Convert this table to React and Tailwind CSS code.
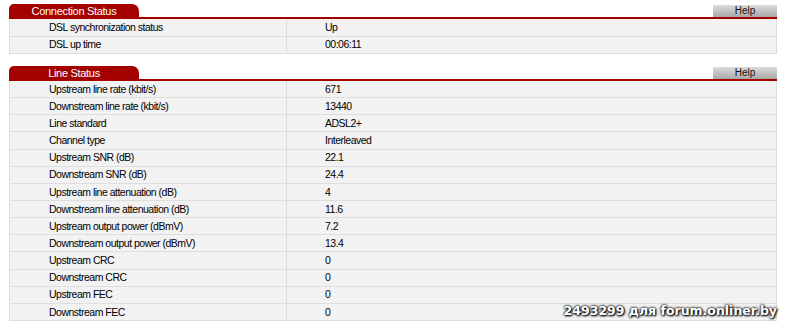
const connection = [
  ['DSL synchronization status', 'Up'],
  ['DSL up time', '00:06:11'],
];

const line = [
  ['Upstream line rate (kbit/s)', '671'],
  ['Downstream line rate (kbit/s)', '13440'],
  ['Line standard', 'ADSL2+'],
  ['Channel type', 'Interleaved'],
  ['Upstream SNR (dB)', '22.1'],
  ['Downstream SNR (dB)', '24.4'],
  ['Upstream line attenuation (dB)', '4'],
  ['Downstream line attenuation (dB)', '11.6'],
  ['Upstream output power (dBmV)', '7.2'],
  ['Downstream output power (dBmV)', '13.4'],
  ['Upstream CRC', '0'],
  ['Downstream CRC', '0'],
  ['Upstream FEC', '0'],
  ['Downstream FEC', '0'],
];

function Section({ title, rows, rowH }) {
  return (
    <div className="w-[768px]">
      <div className="flex items-end justify-between h-[13px]">
        <div className="w-[130px] h-[13px] rounded-tl-[5px] rounded-tr-[7px] bg-[#a50000] flex items-center justify-center text-white text-[11px] tracking-[-0.3px] leading-none pt-px">
          {title}
        </div>
        <div className="w-[64px] h-[12px] bg-gradient-to-b from-[#dcdcdc] to-[#a9a9a9] flex items-center justify-center text-[10px] leading-none text-[#111]">
          Help
        </div>
      </div>
      <div className="h-[2px] bg-[#a50000]" />
      <div className="border-x border-[#dedede]">
        {rows.map(([label, value]) => (
          <div key={label} className={`flex ${rowH} bg-[#f2f2f2] border-b border-[#dedede] text-[10.5px] tracking-[-0.5px] text-[#000]`}>
            <div className="w-[277px] border-r border-[#dedede] pl-[39px] pt-px flex items-center">{label}</div>
            <div className="flex-1 pl-[38px] pt-px flex items-center">{value}</div>
          </div>
        ))}
      </div>
    </div>
  );
}

export default function App() {
  return (
    <div className="relative w-[800px] h-[336px] bg-white pl-[9px] pt-[4px] font-['Liberation_Sans',Arial,sans-serif]">
      <Section title="Connection Status" rows={connection} rowH="h-[17.5px]" />
      <div className="h-[12px]" />
      <Section title="Line Status" rows={line} rowH="h-[17.15px]" />
      <div className="absolute right-[23px] top-[305px] text-white font-bold text-[12.5px] leading-none font-['DejaVu_Sans',Verdana,sans-serif] [text-shadow:0_0_3px_#000,0_0_2px_#000,1px_1px_2px_#000]">
        2493299 для forum.onliner.by
      </div>
    </div>
  );
}
